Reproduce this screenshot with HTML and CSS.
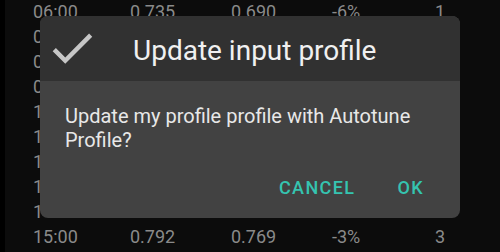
FILE: index.html
```html
<!DOCTYPE html>
<html>
<head>
    <title>Autotune</title>
    <meta charset="UTF-8">
    <meta name="viewport" content="width=device-width, initial-scale=1.0">
    <link rel="stylesheet" href="styles.css">
</head>
<body>
    <div class="table">
        <div class="row"><span>06:00</span><span>0.735</span><span>0.690</span><span>-6%</span><span>1</span></div>
        <div class="row"><span>07:00</span><span>0.735</span><span>0.701</span><span>-5%</span><span>1</span></div>
        <div class="row"><span>08:00</span><span>0.760</span><span>0.722</span><span>-5%</span><span>2</span></div>
        <div class="row"><span>09:00</span><span>0.760</span><span>0.731</span><span>-4%</span><span>2</span></div>
        <div class="row"><span>10:00</span><span>0.775</span><span>0.744</span><span>-4%</span><span>2</span></div>
        <div class="row"><span>11:00</span><span>0.775</span><span>0.750</span><span>-3%</span><span>3</span></div>
        <div class="row"><span>12:00</span><span>0.780</span><span>0.757</span><span>-3%</span><span>3</span></div>
        <div class="row"><span>13:00</span><span>0.785</span><span>0.761</span><span>-3%</span><span>3</span></div>
        <div class="row"><span>14:00</span><span>0.790</span><span>0.766</span><span>-3%</span><span>3</span></div>
        <div class="row"><span>15:00</span><span>0.792</span><span>0.769</span><span>-3%</span><span>3</span></div>
    </div>

    <div class="dialog">
        <div class="dialog-header">
            <svg class="dialog-icon" viewBox="0 0 24 24" width="54" height="54">
                <path d="M9 16.17L4.83 12l-1.42 1.41L9 19 21 7l-1.41-1.41z" fill="#c6c6c6"/>
            </svg>
            <h1>Update input profile</h1>
        </div>
        <div class="dialog-body">
            <p>Update my profile profile with Autotune Profile?</p>
            <div class="dialog-actions">
                <button>CANCEL</button>
                <button>OK</button>
            </div>
        </div>
    </div>
</body>
</html>
```

FILE: styles.css
```css
:root {
    --accent: #35c4b0;
    --header: #313131;
    --surface: #424242;
}

body {
    margin: 0;
    height: 252px;
    overflow: hidden;
    background: #0c0c0c;
    border-left: 5px solid #000;
    font-family: Roboto, "Noto Sans", sans-serif;
    position: relative;
}

/* background table */
.table {
    padding-left: 28px;
    margin-top: -1px;
}

.row {
    display: grid;
    grid-template-columns: 97px 101px 101px 103px 1fr;
    height: 25px;
    line-height: 25px;
    font-size: 18px;
    color: #8a8a8a;
}

/* dialog */
.dialog {
    position: absolute;
    left: 35px;
    top: 16px;
    width: 420px;
    height: 202px;
    border-radius: 8px;
    overflow: hidden;
    background: var(--surface);
}

.dialog-header {
    display: flex;
    align-items: center;
    height: 65px;
    background: var(--header);
}

.dialog-icon {
    margin-left: 5px;
    margin-top: -1px;
}

.dialog-header h1 {
    margin: 0 0 0 34px;
    padding-top: 4px;
    font-size: 28px;
    font-weight: 400;
    color: #f0f0f0;
}

.dialog-body {
    padding: 23px 25px 0;
}

.dialog-body p {
    margin: 0;
    font-size: 20px;
    line-height: 24px;
    color: #e8e8e8;
}

.dialog-actions {
    display: flex;
    justify-content: flex-end;
    gap: 26px;
    margin-top: 18px;
    padding-right: 3px;
}

.dialog-actions button {
    background: none;
    border: none;
    padding: 0 8px;
    height: 36px;
    line-height: 36px;
    font-family: inherit;
    font-size: 18px;
    font-weight: 500;
    letter-spacing: 1.4px;
    color: var(--accent);
}
```
